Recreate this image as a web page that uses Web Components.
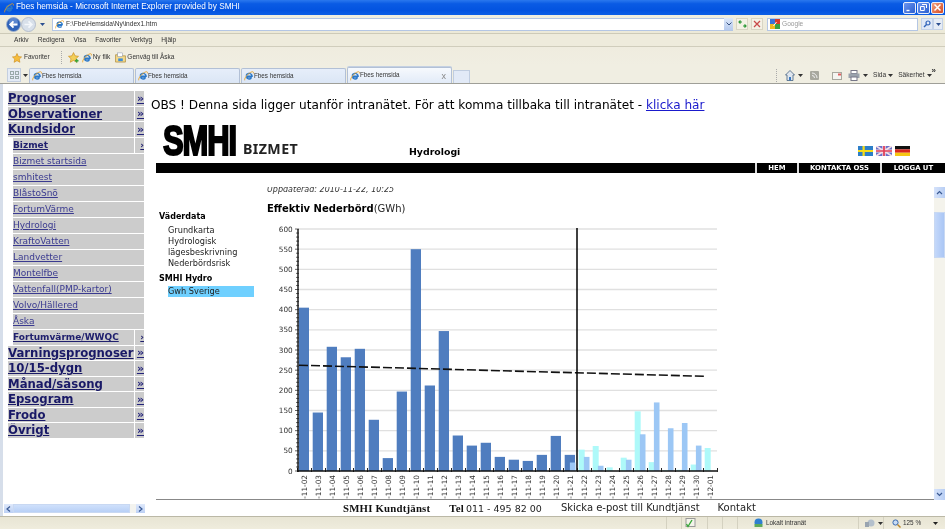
<!DOCTYPE html>
<html lang="sv"><head><meta charset="utf-8"><title>Fbes hemsida</title>
<style>
html,body{margin:0;padding:0;height:529px;overflow:hidden;background:#fff}
</style></head><body>
<ie-window></ie-window>
<script>
const ICON={
 e:(s=10)=>`<svg width="${s}" height="${s}" viewBox="0 0 12 12"><path d="M9.6 7.2H3.2C3.4 9.6 6.6 10.4 8.9 8.6M2.6 5.6C2.9 2.6 7.4 1.8 9.2 4.6 9.6 5.2 9.7 5.7 9.7 6.2H3" fill="none" stroke="#2b78c8" stroke-width="1.7"/><path d="M.8 11.2C.2 8 5.4 2 9.8 .9 11 .6 11.8 1.4 11.2 3" fill="none" stroke="#e8a020" stroke-width="1"/></svg>`,
 star:(s=10)=>`<svg width="${s}" height="${s}" viewBox="0 0 12 12"><path d="M6 .6 7.7 4.2 11.5 4.7 8.7 7.3 9.5 11.2 6 9.2 2.5 11.2 3.3 7.3.5 4.7 4.3 4.2z" fill="#f6bd3c" stroke="#c98a1c" stroke-width=".7"/></svg>`,
 starAdd:()=>`<svg width="11" height="11" viewBox="0 0 12 12"><path d="M6 .6 7.7 4.2 11.5 4.7 8.7 7.3 9.5 11.2 6 9.2 2.5 11.2 3.3 7.3.5 4.7 4.3 4.2z" fill="#f2cf58" stroke="#c98a1c" stroke-width=".7"/><path d="M7.5 9.5h4M9.5 7.5v4" stroke="#3aa43a" stroke-width="1.5"/></svg>`,
 folder:()=>`<svg width="11" height="11" viewBox="0 0 12 12"><path d="M.6 3h4l1 1.2h5.8v6.8H.6z" fill="#f4d98a" stroke="#a5802c" stroke-width=".7"/><rect x="3" y="1" width="5" height="4" fill="#fff" stroke="#7d8ba5" stroke-width=".5"/><path d="M3.5 7h5v3h-5z" fill="#3f8ed8"/></svg>`,
 back:()=>`<svg width="15" height="15" viewBox="0 0 15 15"><circle cx="7.5" cy="7.5" r="7" fill="#2f62b8" stroke="#9fb0cc" stroke-width=".8"/><circle cx="7.5" cy="5" r="4.4" fill="#7fa4e0" opacity=".55"/><path d="M11.5 7.5H4.5M7.5 4.3 4.2 7.5 7.5 10.7" fill="none" stroke="#fff" stroke-width="1.8"/></svg>`,
 fwd:()=>`<svg width="15" height="15" viewBox="0 0 15 15"><circle cx="7.5" cy="7.5" r="7" fill="#d8e0ea" stroke="#a8b4c6" stroke-width=".8"/><path d="M3.5 7.5H10.5M7.5 4.3 10.8 7.5 7.5 10.7" fill="none" stroke="#f4f7fb" stroke-width="1.7"/></svg>`,
 se:()=>`<svg width="15" height="10" viewBox="0 0 16 11" preserveAspectRatio="none"><rect width="16" height="11" fill="#2d7fc8"/><path d="M0 5.5h16M6 0v11" stroke="#f6dc18" stroke-width="2.4"/></svg>`,
 uk:()=>`<svg width="16" height="10" viewBox="0 0 16 11" preserveAspectRatio="none"><rect width="16" height="11" fill="#6a6fc8"/><path d="M0 0 16 11M16 0 0 11" stroke="#f4dfe6" stroke-width="2"/><path d="M0 5.5h16M8 0v11" stroke="#f4dfe6" stroke-width="3.4"/><path d="M0 5.5h16M8 0v11" stroke="#e0405a" stroke-width="1.8"/></svg>`,
 de:()=>`<svg width="15" height="10" viewBox="0 0 16 11" preserveAspectRatio="none"><rect width="16" height="3.7" fill="#111"/><rect y="3.7" width="16" height="3.7" fill="#d8261c"/><rect y="7.4" width="16" height="3.6" fill="#f6c613"/></svg>`,
 caret:(c='#333')=>`<svg width="5" height="3" viewBox="0 0 5 3" style="flex:none"><path d="M0 0h5L2.5 3z" fill="${c}"/></svg>`
};
const def=(n,css,html,extra)=>{customElements.define(n,class extends HTMLElement{
 constructor(){super();const r=this.attachShadow({mode:'open'});r.innerHTML=`<style>${css}</style>`+(typeof html==='function'?html(this):html);}
 connectedCallback(){if(extra)extra(this);}
});};
const CH='font:6.6px/1 "Liberation Sans",sans-serif;color:#333;';

def('ie-title',`:host{display:flex;align-items:center;height:15px;background:linear-gradient(#2a78ee 0,#0a5be4 25%,#0353e0 70%,#0b5ee6 100%);padding-left:4px;color:#fff;font:8.25px/1 "Liberation Sans",sans-serif}
.t{margin-left:2px;flex:1}.b{width:13px;height:12px;border:1px solid #e8eefb;border-radius:2px;margin-right:1px;box-sizing:border-box;background:linear-gradient(135deg,#6c95ef,#2a5fd0);display:flex;align-items:center;justify-content:center}
.x{background:linear-gradient(135deg,#f0a080,#d84a20);margin-right:1px}`,
`${ICON.e(10)}<span class="t">Fbes hemsida - Microsoft Internet Explorer provided by SMHI</span>
<span class="b"><svg width="9" height="9" viewBox="0 0 9 9"><path d="M1.5 7.5h3" stroke="#fff" stroke-width="1.4"/></svg></span>
<span class="b"><svg width="9" height="9" viewBox="0 0 9 9"><path d="M3 1.5h4.5v3.5M1.5 3.5h3.8v4H1.5z" fill="none" stroke="#fff"/></svg></span>
<span class="b x"><svg width="9" height="9" viewBox="0 0 9 9"><path d="M1.5 1.5l6 6M7.5 1.5l-6 6" stroke="#fff" stroke-width="1.5"/></svg></span>`);

def('ie-nav',`:host{display:flex;align-items:center;height:19px;background:linear-gradient(#f0eee0,#ece9d8);border-bottom:1px solid #cdcab8;padding-left:6px;box-sizing:border-box;${CH}}
.c{margin:0 7px 0 4px;display:flex}.box{background:#fff;border:1px solid #b4c6e4;height:13px;box-sizing:border-box;display:flex;align-items:center}
.addr{width:681px;padding-left:2px;gap:2px;font-size:6.6px}.addr span{flex:1}.dd{width:9px;height:12px;margin-right:-1px;background:linear-gradient(#dce7f8,#b6caee);display:flex;align-items:center;justify-content:center}
.tb{width:12px;height:12px;margin-left:3px;border:1px solid #d8d5c4;box-sizing:border-box;background:#f4f2e6;display:flex;align-items:center;justify-content:center}
.g{width:151px;margin-left:4px;padding-left:2px;gap:2px;color:#999}`,
`${ICON.back()}${ICON.fwd()}<span class="c">${ICON.caret('#2c4f90')}</span>
<div class="box addr">${ICON.e(9)}<span>F:\\Fbe\\Hemsida\\Ny\\index1.htm</span><i class="dd"><svg width="6" height="4" viewBox="0 0 6 4"><path d="M.5.5 3 3 5.5.5" fill="none" stroke="#36507f"/></svg></i></div>
<span class="tb" style="margin-left:3px"><svg width="9" height="8" viewBox="0 0 9 8"><path d="M4 2H1M2.5.5 1 2l1.5 1.5M5 6h3M6.5 4.5 8 6 6.5 7.5" fill="none" stroke="#2f9a3a" stroke-width="1.2"/></svg></span>
<span class="tb"><svg width="8" height="8" viewBox="0 0 8 8"><path d="M1 1l6 6M7 1 1 7" stroke="#c84a4a" stroke-width="1.3"/></svg></span>
<div class="box g"><svg width="10" height="10" viewBox="0 0 10 10"><rect width="5" height="5" fill="#3a72d8"/><rect x="5" width="5" height="5" fill="#d83a2a"/><rect y="5" width="5" height="5" fill="#f0b820"/><rect x="5" y="5" width="5" height="5" fill="#38a040"/><path d="M3.5 7 6.5 3" stroke="#fff" stroke-width="1"/></svg><span>Google</span></div>
<span class="tb" style="margin-left:3px;background:#dfe8f6;border-color:#c4d2e8"><svg width="8" height="8" viewBox="0 0 8 8"><circle cx="5" cy="3" r="2" fill="none" stroke="#2f62b8" stroke-width="1.2"/><path d="M3.5 4.5 1 7" stroke="#2f62b8" stroke-width="1.4"/></svg></span>
<span class="tb" style="margin-left:0;width:10px;background:#e6ecf5;border-color:#c4d2e8">${ICON.caret('#2c4f90')}</span>`);

def('ie-menubar',`:host{display:flex;align-items:center;height:13px;padding-top:1px;background:#eeebdc;border-bottom:1px solid #d0cdbc;box-sizing:border-box;${CH}}
span{display:block}`,
`<span style="margin-left:14px">Arkiv</span><span style="margin-left:9px">Redigera</span><span style="margin-left:9px">Visa</span><span style="margin-left:9px">Favoriter</span><span style="margin-left:9px">Verktyg</span><span style="margin-left:9px">Hjälp</span>`);

def('ie-favbar',`:host{display:flex;align-items:center;height:19px;padding:2px 0 0 12px;background:linear-gradient(#efecdf,#f0eee2);box-sizing:border-box;${CH}font-size:6.5px}
.a{display:flex;align-items:center;gap:2px}`,
`<span class="a">${ICON.star(10)}Favoriter</span>
<span style="width:1px;height:13px;margin:0 6px 0 11px;border-left:1px dotted #aaa;box-sizing:border-box"></span>
<span class="a">${ICON.starAdd()}</span><span class="a" style="margin-left:3px;gap:1px">${ICON.e(10)}Ny flik</span><span class="a" style="margin-left:5px;gap:1px">${ICON.folder()}Genväg till Åska</span>`);

def('ie-tab',`:host{display:flex;align-items:center;flex:none;width:105px;height:15px;box-sizing:border-box;padding-left:2px;margin-right:1px;background:linear-gradient(#e6eefa,#dbe6f5);border:1px solid #b2c0d6;border-bottom:0;border-radius:2px 2px 0 0;${CH}font-size:6.3px}
:host([active]){height:16px;background:linear-gradient(#f6f9fd,#e2ebf8);box-shadow:0 -1px 0 #c4d0e2}
span{flex:1}i{font:normal 9px "Liberation Sans";color:#888;margin-right:5px;display:none}:host([active]) i{display:block}`,
`${ICON.e(10)}<span>Fbes hemsida</span><i>x</i>`);

def('ie-tabs',`:host{display:flex;align-items:flex-end;height:18px;padding-left:7px;background:#f0eee2;border-bottom:1px solid #9f9f98;box-sizing:border-box;${CH}}
.q{width:14px;height:14px;flex:none;box-sizing:border-box;border:1px solid #c4cfe0;background:#e4ebf6;display:grid;grid-template-columns:4px 4px;gap:1px;padding:2px;margin-bottom:1px}.q i{border:1px solid #9aa}
.d{width:8px;height:14px;flex:none;margin-bottom:1px;display:flex;align-items:center;justify-content:center}
.nt{width:17px;height:13px;flex:none;border:1px solid #c0cde0;border-bottom:0;background:#e2eaf7;box-sizing:border-box}
.r{display:flex;align-items:center;height:15px;margin-left:306px;flex:none;white-space:nowrap}.x{margin-left:auto}`,
`<div class="q"><i></i><i></i><i></i><i></i></div><div class="d">${ICON.caret()}</div>
<ie-tab></ie-tab><ie-tab></ie-tab><ie-tab></ie-tab><ie-tab active></ie-tab><div class="nt"></div>
<div class="r"><span style="width:1px;height:13px;border-left:1px dotted #aaa;box-sizing:border-box"></span>
<svg style="margin-left:8px" width="10" height="11" viewBox="0 0 10 11"><path d="M5 .5.5 5H2v5.5h6V5h1.5z" fill="#dfe6ee" stroke="#44607f" stroke-width=".8"/><rect x="4" y="7" width="2" height="3.5" fill="#3a78c0"/></svg><span style="margin-left:3px;display:flex">${ICON.caret()}</span>
<svg style="margin-left:7px" width="9" height="9" viewBox="0 0 9 9"><rect width="9" height="9" rx="1" fill="#a8a89e"/><path d="M2 2a5 5 0 0 1 5 5M2 4.5A2.5 2.5 0 0 1 4.5 7" fill="none" stroke="#eee"/></svg>
<svg style="margin-left:13px" width="10" height="8" viewBox="0 0 10 8"><rect x=".5" y=".5" width="9" height="7" fill="#f4f4f0" stroke="#a8a89e"/><path d="M6 1.5h3v2H6z" fill="#e06060"/></svg>
<svg style="margin-left:6px" width="12" height="11" viewBox="0 0 12 11"><rect x="3" y=".5" width="6" height="3" fill="#fff" stroke="#778"/><rect x=".5" y="3.5" width="11" height="4.5" fill="#9aa2ac"/><rect x="3" y="7" width="6" height="3.5" fill="#fff" stroke="#778"/></svg><span style="margin-left:3px;display:flex">${ICON.caret()}</span>
<span style="margin-left:5px">Sida</span><span style="margin-left:2px;display:flex">${ICON.caret()}</span><span style="margin-left:5px">Säkerhet</span><span style="margin-left:2px;display:flex">${ICON.caret()}</span></div><span class="x" style="margin:0 3px 8px 0;font-size:8px;font-weight:bold">»</span>`);

def('menu-row',`:host{display:flex;box-sizing:border-box;margin-bottom:1px;font-family:"DejaVu Sans",Verdana,sans-serif;height:var(--h,15px)}
a{color:inherit;text-decoration:underline;display:block;white-space:nowrap}
.m{flex:1;background:#ccc;overflow:hidden;display:flex;align-items:center}
.s{background:#ccc;display:flex;align-items:center;justify-content:flex-end;border-left:1px solid #fff;font-weight:bold;width:9px;padding:0;color:#23237a}
:host([level="1"]){--h:14.5px;color:#191966;font-size:11.7px;font-weight:bold}
:host([level="1"]) .s{font-size:11px}
:host([level="2"]),:host([level="3"]){margin-left:4px;border-left:1px solid #fff;color:#3a3a90;font-size:9px;--h:15px}
:host([level="2"]) .m,:host([level="2"]) .s{font-weight:bold;color:#20206e}
:host([level="2"]) .s{font-size:9px;width:9px}
:host([level="3"]) .s{display:none}`,
h=>`<div class="m"><a>${h.getAttribute('label')}</a></div><div class="s"><a>${h.getAttribute('level')==='2'?'›':'»'}</a></div>`);

def('side-menu',`:host{display:block;padding:7px 0 0 8px;width:136px}`,`<slot></slot>`);

def('h-scroll',`:host{display:flex;align-items:center;height:9px;margin:0 0 3px 4px;width:141px;background:#f3f3ef}
.a{width:9px;height:9px;flex:none;background:linear-gradient(#dfe9fb,#bcd0f4);display:flex;align-items:center;justify-content:center}
.th{flex:1;height:9px;margin:0 6px 0 0;background:linear-gradient(#cfe0fb,#b8d0f6);border:1px solid #c8d8f2;box-sizing:border-box}`,
`<div class="a"><svg width="5" height="6" viewBox="0 0 5 6"><path d="M4 .5 1 3l3 2.5" fill="none" stroke="#3a5a94" stroke-width="1.2"/></svg></div><div class="th"></div><div class="a"><svg width="5" height="6" viewBox="0 0 5 6"><path d="M1 .5 4 3 1 5.5" fill="none" stroke="#3a5a94" stroke-width="1.2"/></svg></div>`);

def('v-scroll',`:host{display:flex;flex-direction:column;width:11px;flex:none;background:#f4f3ec}
.a{height:11px;background:linear-gradient(90deg,#d5e2fa,#b8cef4);display:flex;align-items:center;justify-content:center}
.g{height:14px}.th{height:46px;background:linear-gradient(90deg,#c4d8fa,#aac6f5);border:1px solid #c8d8f2;box-sizing:border-box}.f{flex:1}`,
`<div class="a"><svg width="7" height="5" viewBox="0 0 7 5"><path d="M1 4 3.5 1.5 6 4" fill="none" stroke="#3a5a94" stroke-width="1.2"/></svg></div><div class="g"></div><div class="th"></div><div class="f"></div><div class="a"><svg width="7" height="5" viewBox="0 0 7 5"><path d="M1 1 3.5 3.5 6 1" fill="none" stroke="#3a5a94" stroke-width="1.2"/></svg></div>`);

def('site-header',`:host{display:block;font-family:"DejaVu Sans",Verdana,sans-serif;color:#000;background:#fff}
.obs{font-size:12.1px;line-height:16px;padding:13px 0 0 1px;height:28px;box-sizing:border-box;white-space:nowrap}
.obs a{color:#1a1acc;text-decoration:underline}
.top{display:flex;align-items:flex-end;height:43px;margin:8px 0 0 6px}
.logo{width:80px;margin-left:7px;height:34px;font:bold 43px/32px "Liberation Sans",sans-serif;-webkit-text-stroke:2.2px #000;letter-spacing:-1.5px;transform:scaleX(.72);transform-origin:0 0;white-space:nowrap;margin-bottom:5px}
.biz{font:bold 14.2px/16px "Noto Sans",sans-serif;letter-spacing:.4px;color:#222;margin-bottom:6px;width:166px}
.hy{font:bold 9.4px/12px "DejaVu Sans",sans-serif;margin-bottom:5px;flex:1}
.fl{display:flex;gap:3px;margin:0 35px 7px 0}
.fl svg{display:block}
.bar{height:10px;background:#000;margin-left:6px;display:flex;justify-content:flex-end;color:#fff;font:bold 6.9px/10px "DejaVu Sans",sans-serif}
.bar b{border-left:2px solid #ddd;display:block;text-align:center;box-sizing:border-box}`,
`<div class="obs">OBS ! Denna sida ligger utanför intranätet. För att komma tillbaka till intranätet - <a>klicka här</a></div>
<div class="top"><div class="logo">SMHI</div><div class="biz">BIZMET</div><div class="hy">Hydrologi</div><div class="fl">${ICON.se()}${ICON.uk()}${ICON.de()}</div></div>
<div class="bar"><b style="width:42px">HEM</b><b style="width:83px">KONTAKTA OSS</b><b style="width:65px">LOGGA UT</b></div><div style="height:14px"></div>`);

def('site-subnav',`:host{display:block;width:111px;flex:none;padding:26px 0 0 3px;box-sizing:border-box;font:8.2px/11px "DejaVu Sans",sans-serif;color:#222}
b{display:block;color:#000;font-size:8px}.g{padding:3px 0 4px 9px}.g.h{padding-top:2px}.on{display:block;background:#6fd0ff;height:11px;width:86px}`,
`<b>Väderdata</b><div class="g">Grundkarta<br>Hydrologisk<br>lägesbeskrivning<br>Nederbördsrisk</div><b>SMHI Hydro</b><div class="g h"><span class="on">Gwh Sverige</span></div>`);

const D=[405,145,308,282,303,127,32,197,550,212,347,88,63,70,35,28,25,40,87,40];
const CY={20:53,21:62,22:9,23:33,24:148,25:22,26:2,27:3,28:16,29:57};
const BL={19:21,20:35,21:13,23:28,24:91,25:170,26:106,27:119,28:63};
const Y=v=>471-v*.4033;
function chart(){
 let s='';
 for(let v=50;v<=600;v+=50)s+=`<path d="M299 ${Y(v)}H717" stroke="#e0e0e0" stroke-width="1.3"/>`;
 for(let v=0;v<=600;v+=10){const big=v%50==0;s+=`<path d="M${big?295:296} ${Y(v)}H299" stroke="#222" stroke-width=".7"/>`;}
 for(let v=0;v<=600;v+=50)s+=`<text x="292.7" y="${Y(v)+2.6}" text-anchor="end" class="l">${v}</text>`;
 D.forEach((v,i)=>s+=`<rect x="${298.7+14*i}" y="${Y(v)}" width="10.3" height="${471-Y(v)}" fill="#4f7dbf"/>`);
 for(const i in CY){s+=`<rect x="${298.7+14*i}" y="${Y(CY[i])}" width="6" height="${471-Y(CY[i])}" fill="#aef9f9"/>`;}
 for(const i in BL){s+=`<rect x="${298.7+14*i+5.2}" y="${Y(BL[i])}" width="5.6" height="${471-Y(BL[i])}" fill="#9cc7f5"/>`;}
 s+=`<path d="M299 365.2 705 376.3" stroke="#111" stroke-width="1.6" stroke-dasharray="9 3" fill="none"/>`;
 s+=`<path d="M577 228V471" stroke="#000" stroke-width="1.5"/><path d="M298 229V472M298 471H717" stroke="#111" stroke-width="1.4" fill="none"/>`;
 for(let i=0;i<31;i++)s+=`<path d="M${297.5+14*i} 468V472" stroke="#111" stroke-width=".9"/>`;
 const days=[];for(let d=2;d<=30;d++)days.push('2010-11-'+String(d).padStart(2,'0'));days.push('2010-12-01');
 days.forEach((d,i)=>{const x=304+14*i;s+=`<text transform="translate(${x+2.6} 475) rotate(-90)" text-anchor="end" class="l">${d}</text>`;});
 return `<svg width="480" height="300" viewBox="267 219 480 300">${s}</svg>`;
}
def('hydro-chart',`:host{display:block;flex:1;overflow:hidden;font-family:"DejaVu Sans",Verdana,sans-serif;color:#222}
svg{display:block;margin-top:3px}.l{font:7.3px "DejaVu Sans",sans-serif;fill:#333}
.u{font:italic 8px/10px "DejaVu Sans",sans-serif;color:#333}
h3{margin:7px 0 0;font:normal 10px/14px "DejaVu Sans",sans-serif}h3 b{color:#000}`,
`<div class="u">Uppdaterad: 2010-11-22, 10:25</div><h3><b>Effektiv Nederbörd</b>(GWh)</h3>${chart()}`);

def('site-body',`:host{display:flex;flex:1;min-height:0;overflow:hidden}
.v{flex:1;margin-left:6px;border-bottom:1px solid #888;overflow:hidden;min-width:0}.in{display:flex;margin:-2px 0 0 0;height:340px}`,
`<div class="v"><div class="in"><site-subnav></site-subnav><hydro-chart></hydro-chart></div></div><v-scroll></v-scroll>`);

def('site-footer',`:host{display:flex;height:16px;align-items:center;background:#fff;font:10px/16px "DejaVu Sans",sans-serif;color:#222;white-space:nowrap;padding-left:193px}
b{font:bold 10.8px/16px "Liberation Serif",serif;color:#111;letter-spacing:.2px}.n{font-size:9.5px;margin-left:2px}`,
`<b>SMHI Kundtjänst</b><span style="margin-left:19px"><b>Tel</b><span class="n">011 - 495 82 00</span></span><span style="margin-left:19px">Skicka e-post till Kundtjänst</span><span style="margin-left:18px">Kontakt</span>`);

def('ie-status',`:host{display:flex;align-items:center;height:13px;background:linear-gradient(#e8e5d4,#efecdd);border-top:1px solid #bbb8a6;box-sizing:border-box;${CH}font-size:6.4px}
.c{border-left:1px solid #d4d1c0;height:12px;display:flex;align-items:center;box-sizing:border-box;gap:2px;flex:none}`,
`<div style="flex:1"></div><div class="c" style="width:15px"></div><div class="c" style="width:26px;padding-left:3px"><svg width="11" height="10" viewBox="0 0 11 10"><rect x="1" y=".5" width="9" height="8" fill="#f4f4ea" stroke="#999"/><path d="M1.5 6 3 8.5 7 2" fill="none" stroke="#38a838" stroke-width="1.4"/></svg></div><div class="c" style="width:15px"></div><div class="c" style="width:15px"></div><div class="c" style="width:16px"></div>
<div class="c" style="width:105px;border:0"><svg width="11" height="11" viewBox="0 0 11 11"><circle cx="5.5" cy="4.5" r="4" fill="#2f7fd0"/><path d="M1.5 6h8v3h-8z" fill="#5faa5a"/></svg>Lokalt intranät</div>
<div class="c" style="width:25px;padding-left:6px"><svg width="11" height="9" viewBox="0 0 11 9"><circle cx="6" cy="4" r="3.5" fill="#b4c0cc"/><rect y="3" width="4" height="5" fill="#99a4b0"/></svg>${ICON.caret()}</div>
<div class="c" style="width:62px;padding-left:8px;gap:2px"><svg width="9" height="9" viewBox="0 0 9 9"><circle cx="3.5" cy="3.5" r="2.6" fill="#c8dcf4" stroke="#3a6ab0"/><path d="M5.5 5.5 8.5 8.5" stroke="#b8862c" stroke-width="1.4"/></svg><span style="width:28px">125 %</span>${ICON.caret('#222')}</div>`);

def('ie-window',`:host{display:flex;flex-direction:column;width:945px;height:529px;overflow:hidden;filter:blur(.35px);background:#fff}
.main{display:flex;flex:1;min-height:0}
.left{width:150px;flex:none;display:flex;flex-direction:column;justify-content:space-between;background:linear-gradient(90deg,#d6deea 0,#d6deea 3px,#fff 3px)}
.right{flex:1;min-width:0;display:flex;flex-direction:column}`,
`<ie-title></ie-title><ie-nav></ie-nav><ie-menubar></ie-menubar><ie-favbar></ie-favbar><ie-tabs></ie-tabs>
<div class="main"><div class="left"><side-menu>
<menu-row level="1" label="Prognoser"></menu-row><menu-row level="1" label="Observationer"></menu-row><menu-row level="1" label="Kundsidor"></menu-row>
<menu-row level="2" label="Bizmet"></menu-row>
<menu-row level="3" label="Bizmet startsida"></menu-row><menu-row level="3" label="smhitest"></menu-row><menu-row level="3" label="BlåstoSnö"></menu-row><menu-row level="3" label="FortumVärme"></menu-row><menu-row level="3" label="Hydrologi"></menu-row><menu-row level="3" label="KraftoVatten"></menu-row><menu-row level="3" label="Landvetter"></menu-row><menu-row level="3" label="Montelfbe"></menu-row><menu-row level="3" label="Vattenfall(PMP-kartor)"></menu-row><menu-row level="3" label="Volvo/Hällered"></menu-row><menu-row level="3" label="Åska"></menu-row>
<menu-row level="2" label="Fortumvärme/WWQC"></menu-row>
<menu-row level="1" label="Varningsprognoser"></menu-row><menu-row level="1" label="10/15-dygn"></menu-row><menu-row level="1" label="Månad/säsong"></menu-row><menu-row level="1" label="Epsogram"></menu-row><menu-row level="1" label="Frodo"></menu-row><menu-row level="1" label="Övrigt"></menu-row>
</side-menu><h-scroll></h-scroll></div>
<div class="right"><site-header></site-header><site-body></site-body><site-footer></site-footer></div></div>
<ie-status></ie-status>`);
</script></body></html>
